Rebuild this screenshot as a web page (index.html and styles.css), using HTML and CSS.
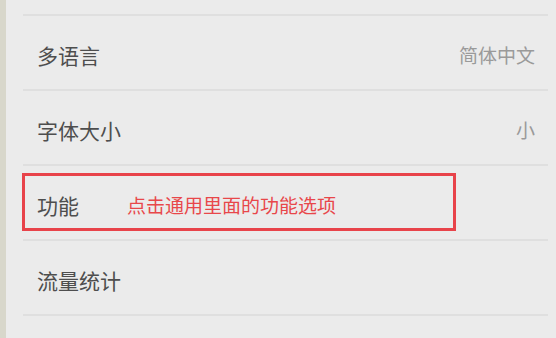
FILE: index.html
```html
<!DOCTYPE html>
<html lang="zh-CN">
<head>
<meta charset="utf-8">
<link rel="stylesheet" href="styles.css">
</head>
<body>
<div class="page">
  <div class="stripe"></div>
  <div class="list">
    <div class="top"></div>
    <div class="row"><span class="label">多语言</span><span class="value">简体中文</span></div>
    <div class="row"><span class="label">字体大小</span><span class="value">小</span></div>
    <div class="row highlight">
      <span class="label">功能</span><span class="note">点击通用里面的功能选项</span>
      <div class="box"></div>
    </div>
    <div class="row"><span class="label">流量统计</span></div>
    <div class="row last"></div>
  </div>
</div>
</body>
</html>
```
FILE: styles.css
```css
html, body {
  margin: 0;
  padding: 0;
  background: #ebebeb;
  font-family: "Noto Sans CJK SC", "Noto Sans", sans-serif;
  overflow: hidden;
}
.page {
  display: flex;
  width: 556px;
  height: 338px;
}
.stripe {
  width: 6px;
  background: #d8d7cb;
  flex: none;
}
.list {
  flex: 1;
  padding: 0 8px 0 17px;
}
.top {
  height: 14px;
}
.row {
  position: relative;
  border-top: 2px solid #dfdfdf;
  display: flex;
  align-items: center;
  padding: 4px 13px 0 14px;
  height: 69px;
}
.label {
  font-size: 21px;
  color: #4e4e4e;
  flex: none;
}
.value {
  margin-left: auto;
  font-size: 19px;
  color: #9a9a9a;
}
.note {
  margin-left: 48px;
  font-size: 19px;
  color: #e8474a;
}
.box {
  position: absolute;
  left: -1px;
  top: 7px;
  width: 428px;
  height: 52px;
  border: 3px solid #e8434a;
}
.last {
  height: 20px;
}
```
